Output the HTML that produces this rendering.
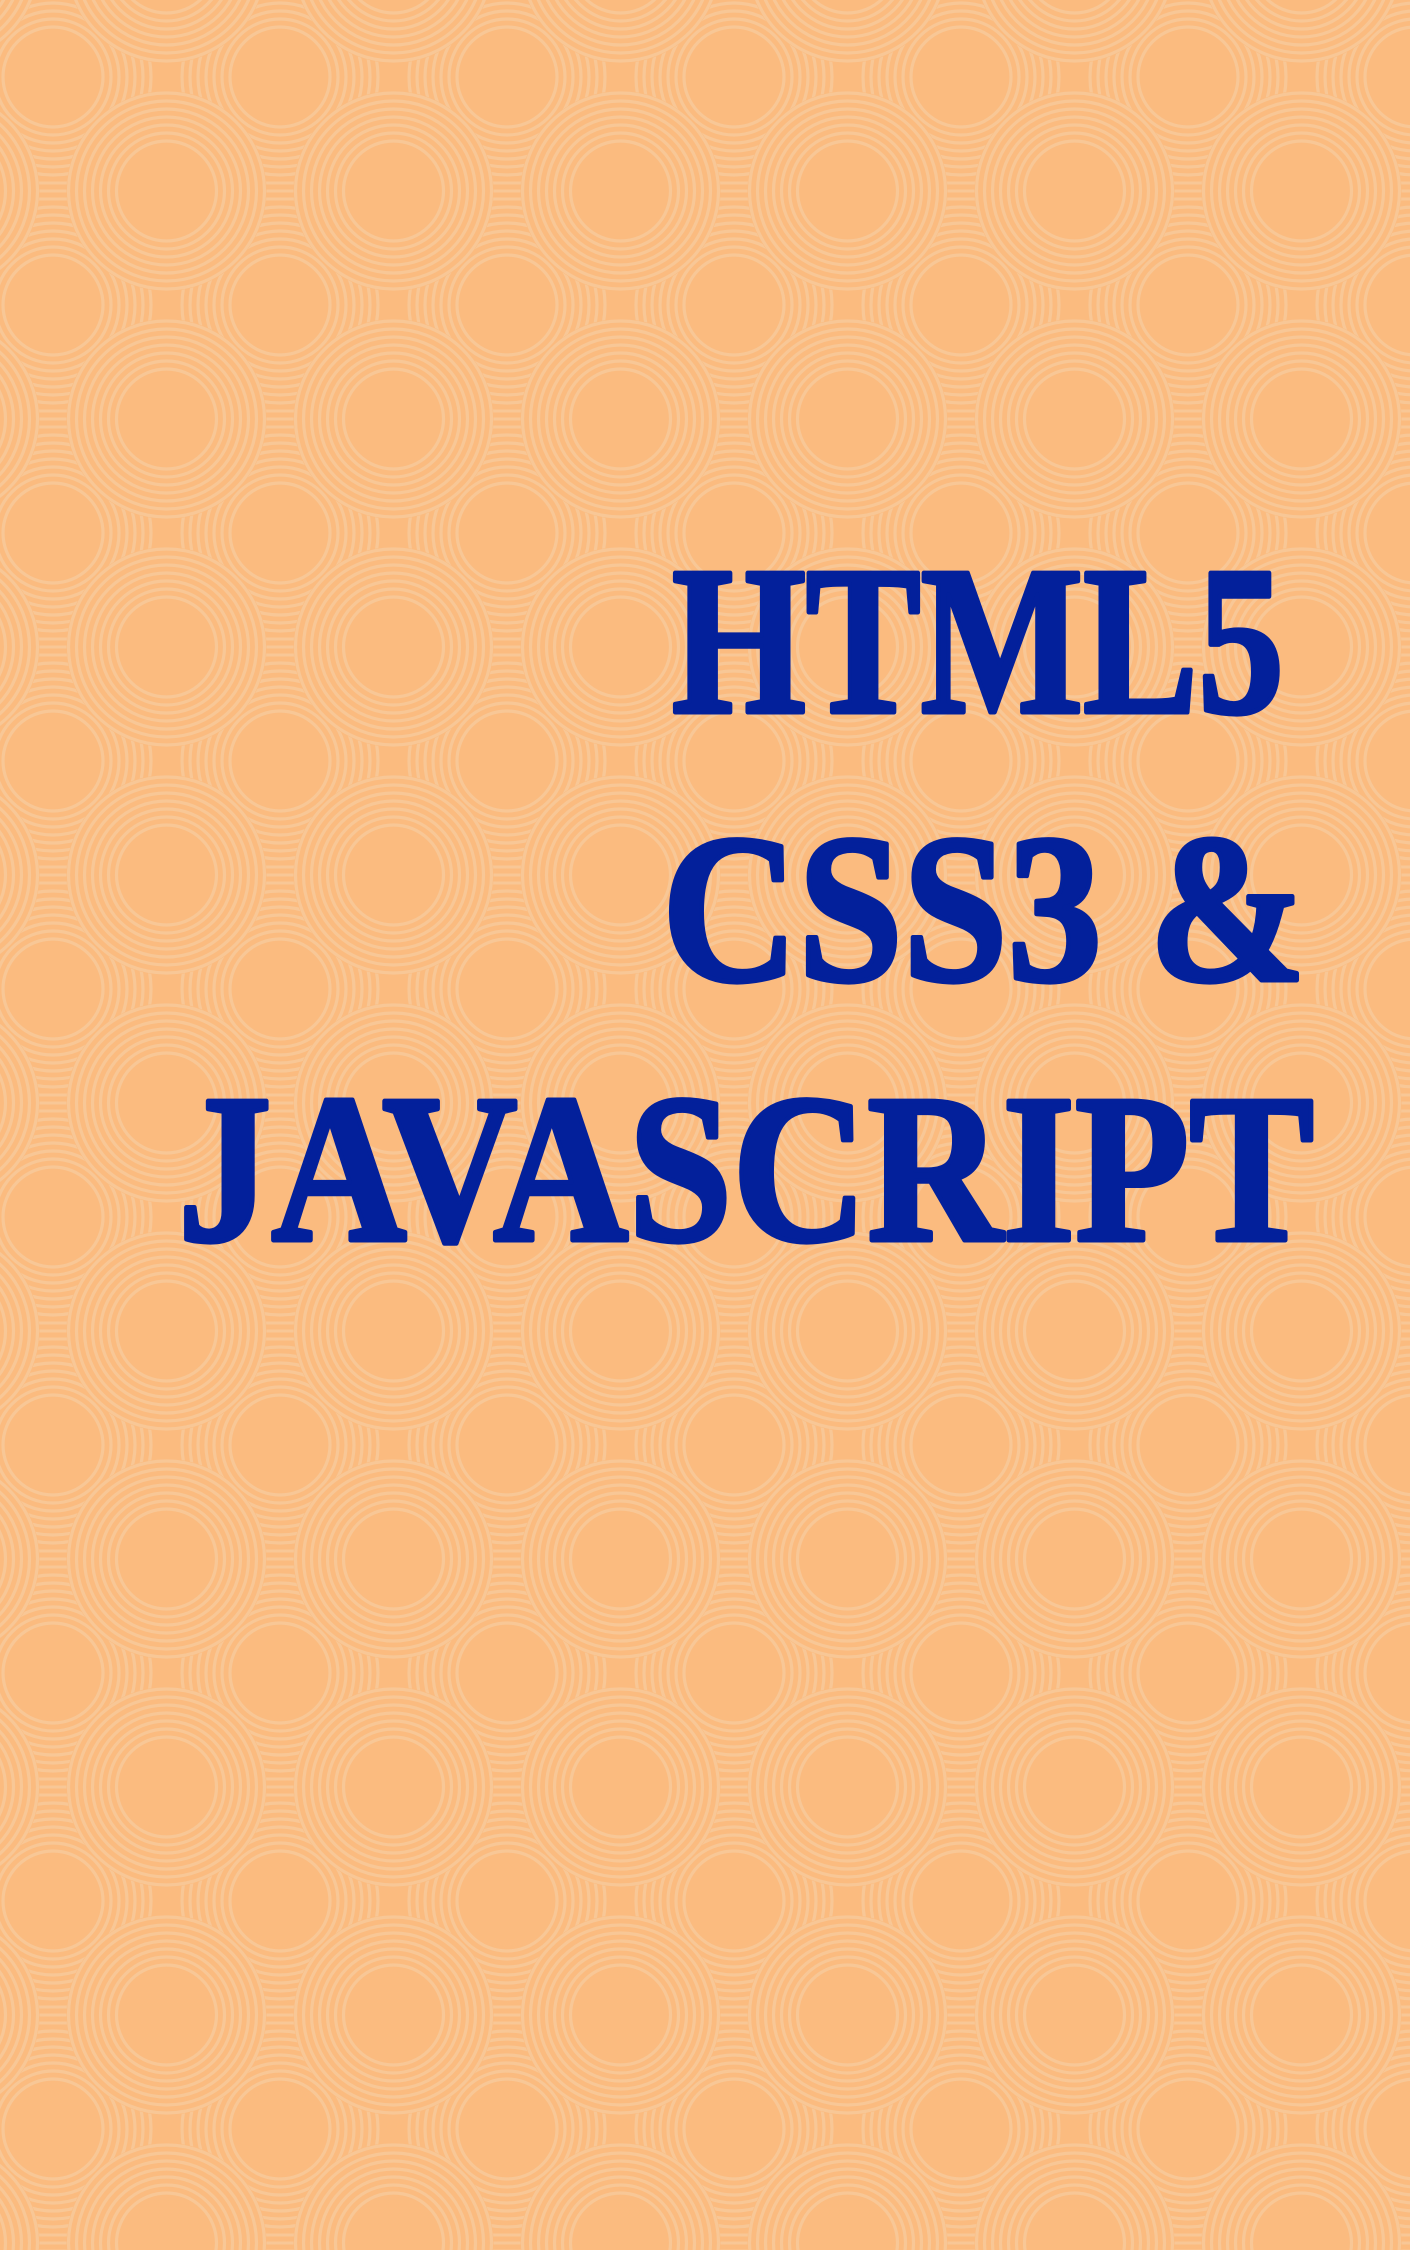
<!DOCTYPE html>
<html><head><meta charset="utf-8">
<style>
html,body{margin:0;padding:0;background:#fbbb7f;}
svg{display:block;}
</style></head>
<body>
<svg width="1410" height="2250" viewBox="0 0 1410 2250" xmlns="http://www.w3.org/2000/svg">
<defs>
<g id="disc">
<circle r="100" fill="#fbbb7f"/>
<g fill="none" stroke="#f8c796" stroke-width="3.2">
<circle r="50"/><circle r="58"/><circle r="66"/><circle r="74"/><circle r="82"/><circle r="90"/><circle r="98"/>
</g>
</g>
<pattern id="p" patternUnits="userSpaceOnUse" x="53" y="77" width="227" height="228">
<rect width="227" height="228" fill="#fbbb7f"/>
<g stroke="#f8c796" stroke-width="3">
<line x1="0" y1="114" x2="227" y2="114" />
<line x1="0" y1="106" x2="227" y2="106" />
<line x1="0" y1="122" x2="227" y2="122" />
</g>
<use href="#disc" x="0" y="0"/>
<use href="#disc" x="227" y="0"/>
<use href="#disc" x="0" y="228"/>
<use href="#disc" x="227" y="228"/>
<use href="#disc" x="113.5" y="114"/>
</pattern>
</defs>
<rect width="1410" height="2250" fill="url(#p)"/>
<g fill="#03209b" stroke="#03209b" stroke-width="5" stroke-linejoin="round" font-family="'Liberation Serif', serif" font-weight="bold" font-size="212">
<text x="672" y="712" textLength="612" lengthAdjust="spacingAndGlyphs">HTML5</text>
<text x="662" y="980" textLength="644" lengthAdjust="spacingAndGlyphs">CSS3 &amp;</text>
<text x="178" y="1240" textLength="1136" lengthAdjust="spacingAndGlyphs">JAVASCRIPT</text>
</g>
</svg>
</body></html>
